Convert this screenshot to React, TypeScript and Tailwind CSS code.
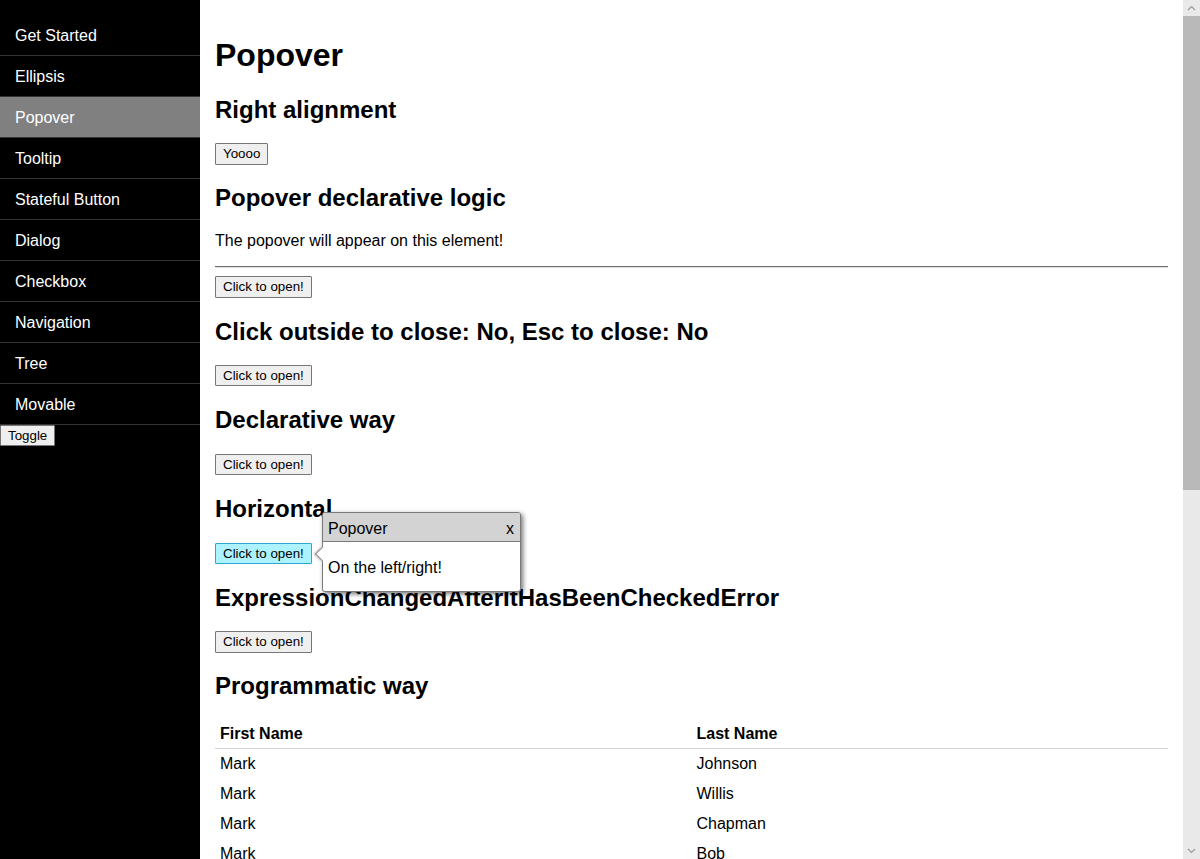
import React from "react";

const navItems = [
  "Get Started",
  "Ellipsis",
  "Popover",
  "Tooltip",
  "Stateful Button",
  "Dialog",
  "Checkbox",
  "Navigation",
  "Tree",
  "Movable",
];

function Btn({ children, active }: { children: React.ReactNode; active?: boolean }) {
  return (
    <button
      className={
        active
          ? "h-[21.33px] px-[7px] border border-[#2fa7d4] bg-[#acf2ff] text-[13.333px] leading-[15px] text-black rounded-[1px] font-['Liberation_Sans',Arial,sans-serif]"
          : "h-[21.33px] px-[7px] border border-[#767676] bg-[#efefef] text-[13.333px] leading-[15px] text-black rounded-[1px] font-['Liberation_Sans',Arial,sans-serif]"
      }
    >
      {children}
    </button>
  );
}

function H2({ children }: { children: React.ReactNode }) {
  return <h2 className="text-[24px] font-bold leading-[27.6px] my-[19.92px]">{children}</h2>;
}

const rows = [
  ["Mark", "Johnson"],
  ["Mark", "Willis"],
  ["Mark", "Chapman"],
  ["Mark", "Bob"],
  ["Mark", "Smith"],
];

export default function App() {
  return (
    <div className="flex h-[859px] w-[1200px] overflow-hidden bg-white text-black font-['Liberation_Sans',Arial,sans-serif]">
      {/* Sidebar */}
      <aside className="w-[200px] shrink-0 bg-black pt-[15px]">
        <ul>
          {navItems.map((item) => (
            <li
              key={item}
              className={
                item === "Popover"
                  ? "h-[41px] border-b border-[#333333] bg-[#808080] text-white text-[16px] px-[15px] pt-[1px] flex items-center"
                  : "h-[41px] border-b border-[#333333] text-white text-[16px] px-[15px] pt-[1px] flex items-center"
              }
            >
              {item}
            </li>
          ))}
        </ul>
        <div className="flex">
          <button className="h-[21px] px-[7px] border border-[#767676] bg-[#efefef] text-[13.333px] leading-[15px] text-black rounded-[1px]">
            Toggle
          </button>
        </div>
      </aside>

      {/* Main content */}
      <main className="flex-1 overflow-hidden px-[15px] pt-[16px] text-[16px]">
        <h1 className="text-[32px] font-bold leading-[36.8px] my-[21.44px]">Popover</h1>
        <H2>Right alignment</H2>
        <div className="flex">
          <Btn>Yoooo</Btn>
        </div>
        <H2>Popover declarative logic</H2>
        <p className="leading-[18.4px] my-[16px]">The popover will appear on this element!</p>
        <hr className="border-0 border-t border-t-[#6e6e6e] border-b border-b-[#e2e2e2] my-[8px]" />
        <div className="flex">
          <Btn>Click to open!</Btn>
        </div>
        <H2>Click outside to close: No, Esc to close: No</H2>
        <div className="flex">
          <Btn>Click to open!</Btn>
        </div>
        <H2>Declarative way</H2>
        <div className="flex">
          <Btn>Click to open!</Btn>
        </div>
        <H2>Horizontal</H2>
        <div className="flex relative">
          <Btn active>Click to open!</Btn>
          {/* Popover overlay */}
          <div className="absolute left-[107px] top-[-31px] z-10 w-[199px] border border-[#7a7a7a] rounded-[3px] bg-white shadow-[2px_2px_5px_rgba(0,0,0,0.55)]">
            <div className="h-[29px] bg-[#d3d3d3] border-b border-[#7a7a7a] rounded-t-[2px] flex items-center justify-between pl-[5px] pr-[6px] text-[16px] pt-[5px]">
              <span>Popover</span>
              <span>x</span>
            </div>
            <div className="h-[49px] flex items-center pl-[5px] text-[16px] pt-[4px]">On the left/right!</div>
            <div className="absolute left-[-6px] top-[36px] w-[10px] h-[10px] rotate-45 bg-white border-l border-b border-[#8a8a8a] shadow-[-1px_1px_2px_rgba(0,0,0,0.25)]" />
          </div>
        </div>
        <H2>ExpressionChangedAfterItHasBeenCheckedError</H2>
        <div className="flex">
          <Btn>Click to open!</Btn>
        </div>
        <H2>Programmatic way</H2>
        <div className="w-full">
          <div className="grid grid-cols-2 h-[29px] border-b border-[#d6d6d6] items-center font-bold">
            <div className="px-[5px]">First Name</div>
            <div className="px-[5px]">Last Name</div>
          </div>
          {rows.map((r, i) => (
            <div key={i} className="grid grid-cols-2 h-[30px] items-center">
              <div className="px-[5px]">{r[0]}</div>
              <div className="px-[5px]">{r[1]}</div>
            </div>
          ))}
        </div>
      </main>

      {/* Scrollbar */}
      <div className="w-[17px] shrink-0 bg-[#e9e9e9] flex flex-col">
        <div className="h-[16px] flex items-center justify-center">
          <svg width="9" height="6" viewBox="0 0 9 6">
            <polyline points="1,5 4.5,1.5 8,5" fill="none" stroke="#9a9a9a" strokeWidth="1.2" />
          </svg>
        </div>
        <div className="h-[474px] bg-[#b9b9b9]" />
        <div className="flex-1" />
        <div className="h-[16px] flex items-center justify-center">
          <svg width="9" height="6" viewBox="0 0 9 6">
            <polyline points="1,1 4.5,4.5 8,1" fill="none" stroke="#9a9a9a" strokeWidth="1.2" />
          </svg>
        </div>
      </div>
    </div>
  );
}
